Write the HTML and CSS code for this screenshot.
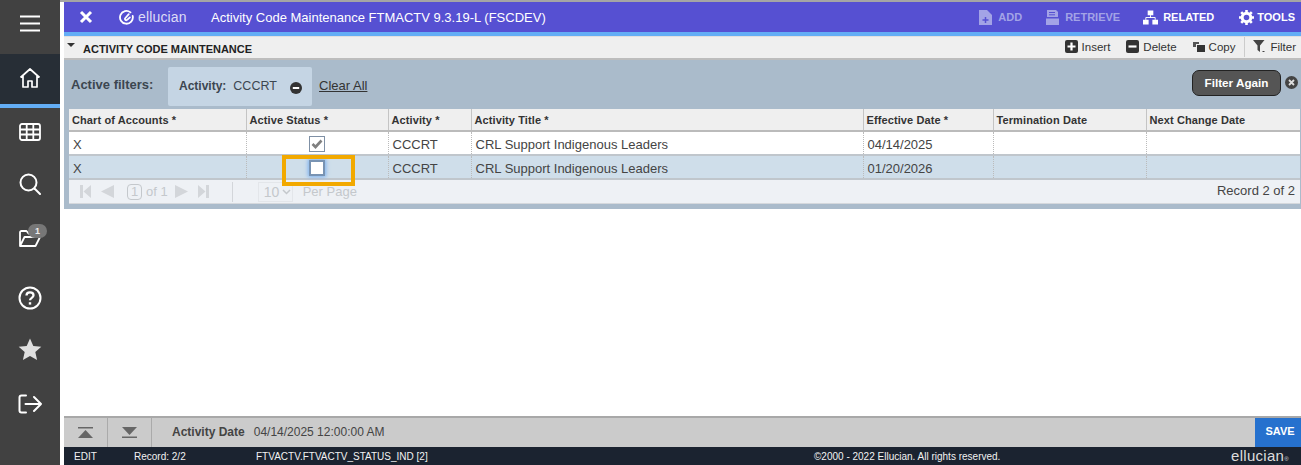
FILE: index.html
```html
<!DOCTYPE html>
<html lang="en">
<head>
<meta charset="utf-8">
<title>Activity Code Maintenance</title>
<link rel="stylesheet" href="styles.css">
</head>
<body>
<div class="app">
  <nav class="rail">
    <div class="rail-item rail-menu">
      <svg width="20" height="17" viewBox="0 0 20 17"><path d="M0 1.500h20M0 8.500h20M0 15.500h20" stroke="#fff" stroke-width="2.200"/></svg>
    </div>
    <div class="rail-item rail-home">
      <svg width="22" height="22" viewBox="0 0 22 22" fill="none" stroke="#fff" stroke-width="1.700" stroke-linejoin="round"><path d="M1.500 10.500 11 2l9.500 8.500M4 8.500V20h5v-6h4v6h5V8.500"/></svg>
    </div>
    <div class="rail-item">
      <svg width="22" height="18" viewBox="0 0 22 18" fill="none" stroke="#fff" stroke-width="1.800"><rect x="1" y="1" width="20" height="16" rx="2"/><path d="M1 6.500h20M1 11.500h20M7.700 1v16M14.300 1v16"/></svg>
    </div>
    <div class="rail-item">
      <svg width="22" height="22" viewBox="0 0 22 22" fill="none" stroke="#fff" stroke-width="2"><circle cx="9.500" cy="9.500" r="8"/><path d="M15.500 15.500 21 21" stroke-linecap="round"/></svg>
    </div>
    <div class="rail-item rail-folder">
      <svg width="22" height="18" viewBox="0 0 22 18" fill="none" stroke="#fff" stroke-width="1.800" stroke-linejoin="round"><path d="M1 16V2.500C1 1.700 1.700 1 2.500 1h5l2 2.500h6V7M1 16h15.500L21 7H5.500L1 16Z"/></svg>
      <span class="badge">1</span>
    </div>
    <div class="rail-item">
      <svg width="24" height="24" viewBox="0 0 24 24" fill="none" stroke="#fff" stroke-width="2"><circle cx="12" cy="12" r="10.500"/><path d="M8.500 9.500C8.500 7.500 10 6.300 12 6.300s3.500 1.200 3.500 3c0 2.500-3.500 2.600-3.500 5" stroke-width="2.300"/><path d="M12 16.200v2.400" stroke-width="2.400"/></svg>
    </div>
    <div class="rail-item">
      <svg width="24" height="23" viewBox="0 0 24 23"><path d="M12 0.500l3.300 7.500 8 .8-6 5.300 1.800 8-7.100-4.200-7.100 4.200 1.800-8-6-5.300 8-.8z" fill="#e0e0e0"/></svg>
    </div>
    <div class="rail-item">
      <svg width="24" height="20" viewBox="0 0 24 20" fill="none" stroke="#fff" stroke-width="2" stroke-linecap="round" stroke-linejoin="round"><path d="M8 1.500H3.500C2.300 1.500 1.500 2.300 1.500 3.500v13c0 1.200.8 2 2 2H8M7.500 10H23M16 3l7 7-7 7"/></svg>
    </div>
  </nav>

  <div class="main">
    <header class="topbar">
      <svg class="close-x" width="14" height="14" viewBox="0 0 14 14"><path d="M2 2l10 10M12 2 2 12" stroke="#fff" stroke-width="3"/></svg>
      <div class="brand">
        <svg width="15" height="15" viewBox="0 0 15 15" fill="none" stroke="#fff" stroke-width="1.800" stroke-linecap="round"><path d="M11.500 2.400A6.400 6.400 0 1 0 13.700 6"/><path d="M9.800 4.200 6.200 8.200c-1 1.400.9 2.700 2.200 1.500l2.500-2.300"/></svg>
        <span>ellucian</span>
      </div>
      <div class="page-title">Activity Code Maintenance FTMACTV 9.3.19-L (FSCDEV)</div>
      <div class="actions">
        <span class="action action-off">
          <svg width="13" height="15" viewBox="0 0 13 15"><path d="M0 0h8l5 5v10H0z" fill="#a3a3e6"/><path d="M6.500 7v6M3.500 10h6" stroke="#5650d2" stroke-width="1.500"/></svg>ADD
        </span>
        <span class="action action-off">
          <svg width="13" height="15" viewBox="0 0 13 15"><path d="M1 0h9l2 2v5H1z" fill="#a3a3e6"/><path d="M3 2.500h6M3 4.800h6" stroke="#5650d2" stroke-width="1"/><path d="M0 8.500h13V15H0z" fill="#a3a3e6"/></svg>RETRIEVE
        </span>
        <span class="action action-related">
          <svg width="15" height="15" viewBox="0 0 16 15" fill="#fff"><path d="M5 0h6v5H5zM0 10h6v5H0zM10 10h6v5h-6z"/><path d="M8 5v3M3 10V7.500h10V10" fill="none" stroke="#fff"/></svg>RELATED
        </span>
        <span class="action action-tools">
          <svg width="15" height="15" viewBox="0 0 15 15"><circle cx="7.500" cy="7.500" r="4.300" fill="none" stroke="#fff" stroke-width="3"/><path d="M7.500 0v15M0 7.500h15M2.200 2.200l10.600 10.600M12.800 2.200 2.200 12.800" stroke="#fff" stroke-width="2.600" stroke-dasharray="2.800 9.400"/></svg>TOOLS
        </span>
      </div>
    </header>
    <div class="accent"></div>

    <section class="panel">
      <div class="section-bar">
        <span class="caret"></span>
        <h2 class="section-title">ACTIVITY CODE MAINTENANCE</h2>
        <div class="tools">
          <span class="tool"><svg width="13" height="13" viewBox="0 0 13 13"><rect width="13" height="13" rx="2" fill="#333"/><path d="M6.500 2.500v8M2.500 6.500h8" stroke="#fff" stroke-width="2.200"/></svg>Insert</span>
          <span class="tool"><svg width="13" height="13" viewBox="0 0 13 13"><rect width="13" height="13" rx="2" fill="#333"/><path d="M2.500 6.500h8" stroke="#fff" stroke-width="2.200"/></svg>Delete</span>
          <span class="tool"><svg width="12" height="10" viewBox="0 0 12 10"><path d="M0 0h6v2H3v3H0z" fill="#555"/><path d="M4 3h8v7H4z" fill="#333"/></svg>Copy</span>
          <span class="tool tool-filter"><svg width="13" height="13" viewBox="0 0 13 13"><path d="M0 0h11.500L7 5.500v6.500L4.500 10V5.500z" fill="#444"/><path d="M9.500 11.500h2" stroke="#444"/></svg>Filter</span>
        </div>
      </div>

      <div class="filters">
        <span class="filters-label">Active filters:</span>
        <div class="chip">
          <b>Activity:</b><span class="chip-value">CCCRT</span>
          <svg width="12" height="12" viewBox="0 0 12 12"><circle cx="6" cy="6" r="6" fill="#333"/><path d="M2.800 6h6.400" stroke="#fff" stroke-width="2"/></svg>
        </div>
        <a class="clear-all">Clear All</a>
        <button class="filter-again">Filter Again</button>
        <svg class="filter-close" width="13" height="13" viewBox="0 0 13 13"><circle cx="6.500" cy="6.500" r="6.500" fill="#444"/><path d="M4 4l5 5M9 4 4 9" stroke="#ddd" stroke-width="1.800"/></svg>
      </div>

      <div class="grid-wrap">
        <table class="grid">
          <colgroup>
            <col class="c1"><col class="c2"><col class="c3"><col class="c4"><col class="c5"><col class="c6"><col class="c7">
          </colgroup>
          <thead>
            <tr>
              <th>Chart of Accounts *</th>
              <th>Active Status *</th>
              <th>Activity *</th>
              <th>Activity Title *</th>
              <th>Effective Date *</th>
              <th>Termination Date</th>
              <th>Next Change Date</th>
            </tr>
          </thead>
          <tbody>
            <tr>
              <td>X</td>
              <td class="center"><span class="check"><svg width="12" height="10" viewBox="0 0 12 10"><path d="M1.500 5 4.500 8 10.500 1.500" fill="none" stroke="#808080" stroke-width="2.600"/></svg></span></td>
              <td>CCCRT</td>
              <td>CRL Support Indigenous Leaders</td>
              <td>04/14/2025</td>
              <td></td>
              <td></td>
            </tr>
            <tr class="selected">
              <td>X</td>
              <td class="center"><span class="check check-focus"></span></td>
              <td>CCCRT</td>
              <td>CRL Support Indigenous Leaders</td>
              <td>01/20/2026</td>
              <td></td>
              <td></td>
            </tr>
          </tbody>
        </table>

        <div class="pager">
          <svg width="11" height="13" viewBox="0 0 11 13" fill="#d3d6da"><path d="M0 0h3v13H0zM11 0v13L3.500 6.500z"/></svg>
          <svg width="13" height="13" viewBox="0 0 13 13" fill="#d3d6da"><path d="M13 0v13L0 6.500z"/></svg>
          <span class="pg-num">1</span>
          <span class="pg-of">of 1</span>
          <svg width="13" height="13" viewBox="0 0 13 13" fill="#d3d6da"><path d="M0 0v13l13-6.500z"/></svg>
          <svg width="11" height="13" viewBox="0 0 11 13" fill="#d3d6da"><path d="M0 0v13l7.500-6.500zM8 0h3v13H8z"/></svg>
          <span class="pg-sep"></span>
          <span class="pg-size">10<svg width="9" height="6" viewBox="0 0 9 6"><path d="M1 1l3.500 3.500L8 1" fill="none" stroke="#c4c8cc" stroke-width="1.500"/></svg></span>
          <span class="pg-per">Per Page</span>
          <span class="pg-record">Record 2 of 2</span>
        </div>
        <div class="callout"></div>
      </div>
    </section>

    <div class="blank"></div>

    <div class="info-bar">
      <span class="nav-btn"><svg width="15" height="11" viewBox="0 0 15 11" fill="#666"><path d="M0 0h15v1.500H0zM7.500 3 15 11H0z"/></svg></span>
      <span class="nav-btn"><svg width="15" height="11" viewBox="0 0 15 11" fill="#666"><path d="M0 0h15L7.500 8zM0 9.500h15V11H0z"/></svg></span>
      <span class="info-label">Activity Date</span>
      <span class="info-value">04/14/2025 12:00:00 AM</span>
      <button class="save">SAVE</button>
    </div>
    <footer class="status">
      <span class="st-mode">EDIT</span>
      <span class="st-record">Record: 2/2</span>
      <span class="st-field">FTVACTV.FTVACTV_STATUS_IND [2]</span>
      <span class="st-copy">©2000 - 2022 Ellucian. All rights reserved.</span>
      <span class="st-logo">ellucian<small>®</small></span>
    </footer>
  </div>
</div>
</body>
</html>
```

FILE: styles.css
```css
* { box-sizing: border-box; }
html, body { margin: 0; height: 100%; }
body {
  font-family: "Liberation Sans", Arial, sans-serif;
  background: #fff;
  color: #333;
  overflow: hidden;
}
.app { display: flex; height: 465px; }

.rail { width: 60px; flex: none; background: #414141; display: flex; flex-direction: column; }
.rail-item { height: 54px; display: flex; align-items: center; justify-content: center; flex: none; position: relative; }
.rail-menu { height: 54px; padding-bottom: 7px; }
.rail-home { height: 54px; background: #272e36; border-bottom: 4px solid #63adf5; padding-bottom: 2px; }
.rail-item:nth-child(3) { height: 48px; }
.rail-item:nth-child(4) { height: 54px; margin-top: 1px; }
.rail-folder { height: 54px; margin-top: 1px; }
.rail-item:nth-child(6) { height: 64px; }
.rail-item:nth-child(7) { height: 38px; }
.rail-item:nth-child(8) { height: 72px; }
.badge {
  position: absolute; left: 28px; top: 12px; width: 19px; height: 14px; border-radius: 7px;
  background: #777; color: #eee; font-size: 9px; font-weight: 700; text-align: center; line-height: 14px;
}

.main { flex: 1; min-width: 0; display: flex; flex-direction: column; padding-left: 4px; border-top: 2px solid #a5a5a5; }
.topbar { height: 30px; flex: none; background: #5650d2; display: flex; align-items: center; color: #fff; }
.close-x { margin-left: 15px; flex: none; }
.brand { display: flex; align-items: center; gap: 4px; margin-left: 26px; font-size: 14px; width: 92px; flex: none; color: #dedcf6; letter-spacing: .15px; }
.page-title { font-size: 13px; }
.actions { margin-left: auto; display: flex; align-items: center; font-size: 11px; font-weight: 700; padding-right: 6px; }
.action { display: flex; align-items: center; gap: 6px; margin-left: 24px; }
.action-related { margin-left: 23px; gap: 5px; }
.action-tools { margin-left: 25px; gap: 3px; }
.action-off { color: #a3a3e6; }
.accent { height: 4px; flex: none; background: #63adf5; }

.panel { background: #aabbcb; padding-bottom: 5px; flex: none; border-left: 1px solid #aabbcb; }
.section-bar {
  height: 24px; background: #efefef; border-top: 1px solid #e0e0e0; border-bottom: 2px solid #bdbdbd;
  display: flex; align-items: center; margin-left: -1px; padding-left: 3px;
}
.caret { width: 0; height: 0; border: 4px solid transparent; border-top: 4px solid #333; border-bottom: 0; margin-bottom: 5px; }
.section-title { margin: 0 0 0 8px; font-size: 11px; font-weight: 700; color: #222; padding-top: 3px; }
.tools { margin-left: auto; display: flex; align-items: center; font-size: 11.500px; color: #333; padding-right: 5px; height: 20px; margin-bottom: 2px; }
.tool { display: flex; align-items: center; gap: 4px; margin-left: 16px; }
.tool-filter { margin-left: 9px; border-left: 1px solid #ccc; padding-left: 8px; height: 20px; }

.filters { height: 49px; display: flex; align-items: center; padding-left: 6px; padding-right: 3px; font-size: 13px; color: #333; }
.filters-label { font-weight: 700; width: 97px; flex: none; color: #3c4650; }
.chip { width: 144px; height: 39px; align-self: flex-start; margin-top: 7px; padding-bottom: 2px; background: #c5d5e4; border-radius: 2px; display: flex; align-items: center; padding-left: 11px; flex: none; color: #3c4650; font-size: 12px; }
.chip b { margin-right: 7px; }
.chip-value { font-size: 12.500px; margin-right: 13px; }
.chip svg { margin-top: 4px; }
.clear-all { margin-left: 7px; font-size: 13px; text-decoration: underline; color: #333; padding-top: 1px; }
.filter-again {
  margin-left: auto; height: 26px; width: 89px; padding: 0 0 2px; border: 1px solid #222; border-radius: 7px;
  align-self: flex-start; margin-top: 10px;
  background: #555; color: #fff; font: 700 11.700px "Liberation Sans", Arial, sans-serif;
}
.filter-close { margin-left: 4px; flex: none; align-self: flex-start; margin-top: 16px; }

.grid-wrap { position: relative; margin-left: 4px; margin-right: 1px; background: #eef1f5; }
.grid { width: 100%; border-collapse: collapse; table-layout: fixed; font-size: 13px; }
.c1 { width: 177px; } .c2 { width: 142px; } .c3 { width: 83px; } .c4 { width: 392px; }
.c5 { width: 130px; } .c6 { width: 153px; } .c7 { width: auto; }
.grid th {
  height: 22px; background: #efefef; font-size: 11px; font-weight: 700; text-align: left; color: #333;
  padding: 0 3px; border-left: 1px solid #c4c4c4; letter-spacing: .1px; border-bottom: 2px solid #bbb;
}
.grid th:first-child, .grid td:first-child { border-left: 0; }
.grid td { height: 24px; padding: 2px 4px 0; background: #fff; color: #444; border-left: 1px dotted #bbb; border-bottom: 2px solid #c0c6cc; }
.grid tr.selected td { background: #cfdeea; }
.center { text-align: center; }
.check {
  display: inline-flex; width: 16px; height: 16px; border: 1px solid #7f90a5; background: #fff;
  align-items: center; justify-content: center; vertical-align: middle;
}
.check-focus { border: 2px solid #7893b3; box-shadow: 0 0 4px 1px #7cb0f0; }

.pager { height: 24px; display: flex; align-items: center; font-size: 13px; color: #c4c8cc; padding-left: 11px; border-bottom: 1px solid #d5d8dc; background: #eef1f5; }
.pager svg { flex: none; }
.pager > svg { margin-right: 10px; }
.pg-num { width: 15px; height: 16px; border: 1px solid #c4c8cc; border-radius: 4px; text-align: center; line-height: 14px; margin-right: 4px; margin-left: 3px; }
.pg-of { margin-right: 7px; }
.pg-sep { width: 1px; height: 20px; background: #d3d6da; margin-left: 13px; margin-right: 25px; }
.pg-size { width: 35px; height: 20px; border: 1px solid #e3e6ea; display: flex; align-items: center; gap: 3px; padding-left: 5px; margin-right: 10px; font-size: 14px; }
.pg-record { margin-left: auto; color: #444; padding: 0 5px 2px 0; }
.callout { position: absolute; left: 213px; top: 46px; width: 73px; height: 31px; border: 4px solid #f2a900; pointer-events: none; }

.blank { flex: 1; }

.info-bar { height: 31px; flex: none; background: #cbcbcb; border-top: 2px solid #a8a8a8; display: flex; align-items: center; font-size: 12px; color: #444; }
.nav-btn { width: 44px; height: 100%; border-right: 1px solid #aaa; display: flex; align-items: center; justify-content: center; flex: none; }
.info-label { font-weight: 700; margin-left: 20px; margin-right: 9px; padding-bottom: 2px; }
.info-value { padding-bottom: 2px; }
.save { margin-left: auto; width: 46px; height: 100%; border: 0; background: #2671ce; color: #fff; font: 700 11px "Liberation Sans", Arial, sans-serif; padding: 0 0 3px 4px; }

.status { height: 18px; flex: none; background: #1b2330; color: #f2f2f2; font-size: 10px; display: flex; align-items: center; padding-top: 1px; }
.st-mode { margin-left: 10px; width: 60px; }
.st-record { width: 122px; }
.st-field { width: 558px; }
.st-logo { margin-left: auto; font-size: 15px; color: #ddd; padding-right: 12px; padding-bottom: 3px; letter-spacing: .3px; }
.st-logo small { font-size: 6px; }
```
